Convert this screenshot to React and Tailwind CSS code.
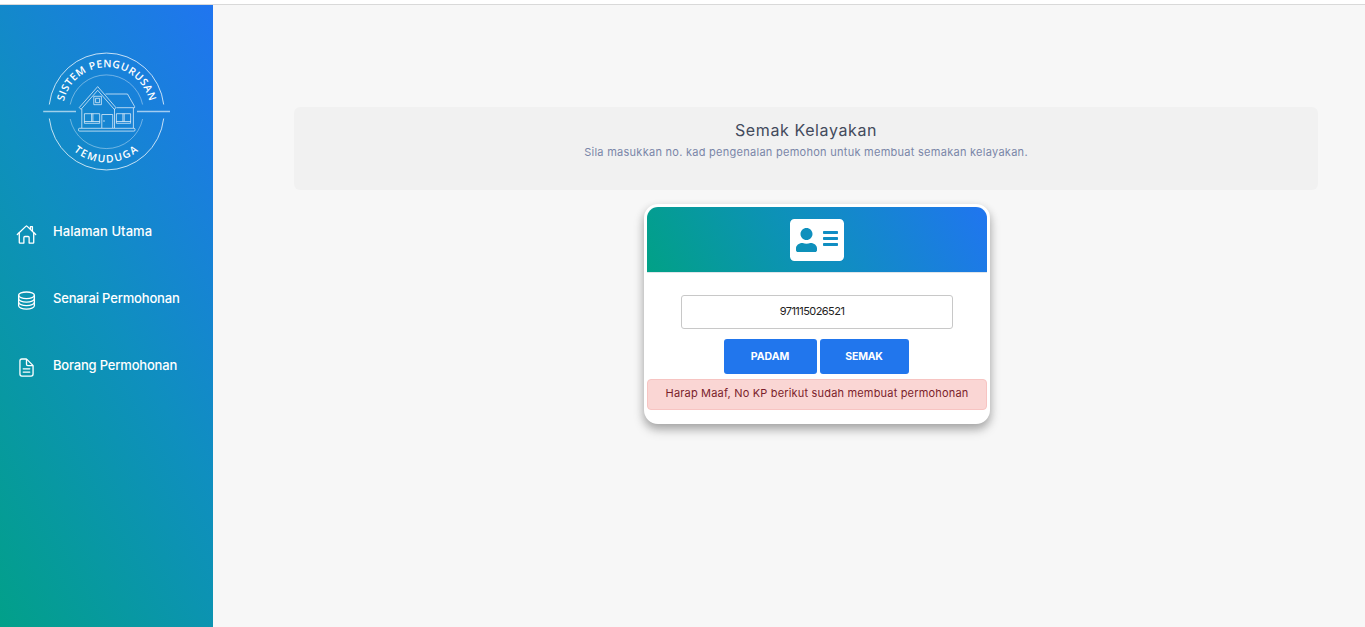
import { IoHomeOutline, IoServerOutline, IoDocumentTextOutline } from "react-icons/io5";
import { FaAddressCard } from "react-icons/fa";

const menu = [
  { label: "Halaman Utama", Icon: IoHomeOutline, track: "tracking-[0.06px]", nudge: "mt-[9px]" },
  { label: "Senarai Permohonan", Icon: IoServerOutline, track: "tracking-[-0.16px]", nudge: "mt-2" },
  { label: "Borang Permohonan", Icon: IoDocumentTextOutline, track: "tracking-[-0.19px]", nudge: "mt-2" },
];

function Logo() {
  return (
    <svg width="128" height="120" viewBox="43 51 128 120" fill="none" stroke="#fff" strokeOpacity="0.75">
      <path d="M49.3 104.5A57.6 58.3 0 0 1 163.7 104.5M49.3 118.5A57.6 58.3 0 0 0 163.7 118.5" strokeWidth="1" />
      <path d="M70.2 104.5A37 37.3 0 0 1 142.6 104.5M70.2 119A37 37.3 0 0 0 142.6 119" strokeWidth="0.7" strokeOpacity="0.55" />
      <path d="M43.2 111.5H76M137 111.5H170" strokeWidth="1.4" strokeOpacity="0.6" />
      <g strokeWidth="0.9" strokeLinejoin="round">
        <path d="M79.3 107.5L97.7 86.6L116 107.7L114.2 109.3L97.7 90.3L81 109.3Z" />
        <path d="M81.8 109V128M114.5 109V128M133.4 108V128M105.5 94H127.5L134.6 106.5V107.7H116.5" />
        <rect x="78.5" y="128.3" width="56.5" height="2.8" rx="1" />
        <rect x="93.8" y="96.3" width="7.6" height="8.4" />
        <rect x="95.6" y="98.3" width="4" height="4.4" />
        <rect x="84.4" y="113.7" width="15.3" height="9.6" />
        <path d="M84.4 121.5H99.7M91.6 113.7V121.5M92.9 113.7V121.5" />
        <path d="M101.8 128V114.5H112.7V128M104 120V122" />
        <rect x="116.4" y="113.7" width="14.2" height="9.6" />
        <path d="M116.4 121.5H130.6M122.9 113.7V121.5M124.2 113.7V121.5" />
      </g>
      <defs>
        <path id="upper" d="M62.7 111A43.8 43.8 0 0 1 150.3 111" />
        <path id="lower" d="M55 111.5A51 51 0 0 0 157 111.5" />
      </defs>
      <g fill="#fff" stroke="none" fontFamily="'Open Sans', sans-serif" fontSize="10.4" fontWeight="600" textAnchor="middle">
        <text><textPath href="#upper" startOffset="50%" textLength="118">SISTEM PENGURUSAN</textPath></text>
        <text><textPath href="#lower" startOffset="50%" textLength="70">TEMUDUGA</textPath></text>
      </g>
    </svg>
  );
}

function Sidebar() {
  return (
    <aside className="w-[213px] shrink-0 bg-[linear-gradient(240deg,#2075f0,#0f8fbf_49%,#01a186_103%)] text-white">
      <div className="flex justify-center pt-[46px]">
        <Logo />
      </div>
      <nav className="mt-[44px] flex flex-col">
        {menu.map(({ label, Icon, track, nudge }) => (
          <a key={label} className="flex h-[67px] items-start pl-4">
            <Icon className={`size-[21px] shrink-0 ${nudge}`} />
            <span className={`ml-4 whitespace-nowrap text-[13px] font-medium leading-8 ${track}`}>{label}</span>
          </a>
        ))}
      </nav>
    </aside>
  );
}

function CheckCard() {
  return (
    <section className="ml-[350px] mt-[14px] h-[220px] w-[346px] rounded-[14px] border-[3px] border-white bg-white shadow-[0_4px_8px_rgba(0,0,0,0.2),0_6px_12px_rgba(0,0,0,0.19)]">
      <div className="flex h-[65px] items-center justify-center rounded-t-[11px] bg-[linear-gradient(240deg,#2075f0,#0f8fbf_50%,#01a186)] text-white">
        <FaAddressCard className="h-12 w-[54px]" />
      </div>
      <div className="flex flex-col items-center border-t border-[#dfe5ea] pt-[22px]">
        <input
          className="h-[34px] w-[272px] rounded-[3px] border border-[#c8c8c8] bg-white pb-[2px] pr-[10px] text-center text-[11px] tracking-[-0.55px] text-[#222]"
          defaultValue="971115026521"
        />
        <div className="mr-[2px] mt-[10px] flex gap-[3px] text-[10.5px] font-bold text-white">
          <button className="h-[35px] w-[93px] rounded-[3px] bg-[#2176ed]">PADAM</button>
          <button className="h-[35px] w-[89px] rounded-[3px] bg-[#2176ed] tracking-[-0.2px]">SEMAK</button>
        </div>
        <div className="mt-[5px] h-[31px] w-full whitespace-nowrap rounded border border-[#f7c4c2] bg-[#fad6d4] text-center text-[11px] leading-[26px] tracking-[0.18px] text-[#7b1e2b]">
          Harap Maaf, No KP berikut sudah membuat permohonan
        </div>
      </div>
    </section>
  );
}

export default function App() {
  return (
    <div className="flex h-[627px] w-[1365px] flex-col overflow-hidden bg-[#f7f7f7] font-[Inter,sans-serif]">
      <header className="h-[5px] shrink-0 border-b border-[#d9d9d9] bg-white" />
      <div className="flex flex-1">
        <Sidebar />
        <main className="flex-1 pl-[81px] pr-[47px] pt-[102px]">
          <section className="h-[83px] rounded-md bg-[#f1f1f1] pt-[11px] text-center">
            <h1 className="text-[16px] leading-6 tracking-[0.6px] text-[#434a5c]">Semak Kelayakan</h1>
            <p className="text-[11px] leading-5 tracking-[0.27px] text-[#7a86a8]">
              Sila masukkan no. kad pengenalan pemohon untuk membuat semakan kelayakan.
            </p>
          </section>
          <CheckCard />
        </main>
      </div>
    </div>
  );
}
